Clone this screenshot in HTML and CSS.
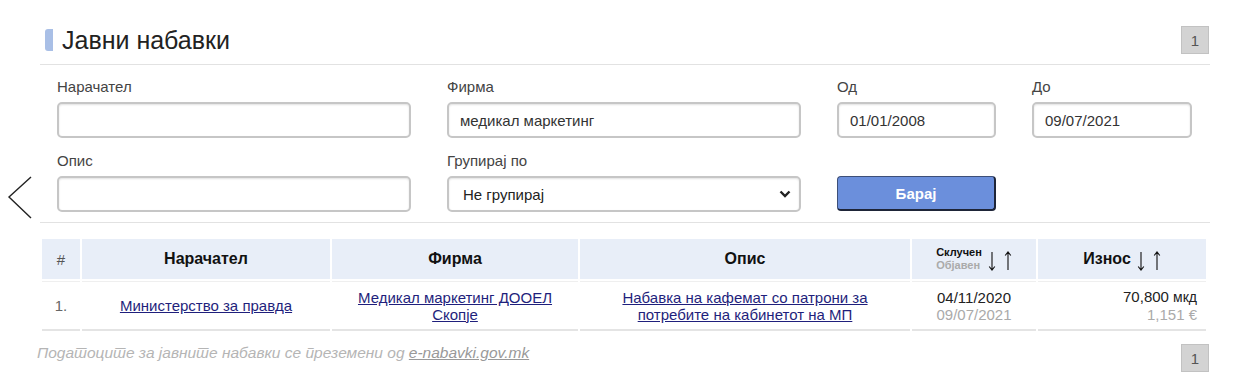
FILE: index.html
```html
<!DOCTYPE html>
<html lang="mk">
<head>
<meta charset="utf-8">
<title>Јавни набавки</title>
<link rel="stylesheet" href="styles.css">
</head>
<body>
<div class="back">
  <svg width="26" height="44" viewBox="0 0 26 44"><polyline points="24,1 2,21 24,42" fill="none" stroke="#222" stroke-width="1.4"/></svg>
</div>
<div class="page">
  <div class="header">
    <h1 class="title"><span class="accent"></span>Јавни набавки</h1>
    <span class="pager">1</span>
  </div>
  <form class="filters">
    <div class="field">
      <label class="lbl">Нарачател</label>
      <input class="inp" type="text" value="">
    </div>
    <div class="field">
      <label class="lbl">Фирма</label>
      <input class="inp" type="text" value="медикал маркетинг">
    </div>
    <div class="field">
      <label class="lbl">Од</label>
      <input class="inp" type="text" value="01/01/2008">
    </div>
    <div class="field">
      <label class="lbl">До</label>
      <input class="inp" type="text" value="09/07/2021">
    </div>
    <div class="field">
      <label class="lbl">Опис</label>
      <input class="inp" type="text" value="">
    </div>
    <div class="field">
      <label class="lbl">Групирај по</label>
      <div class="selwrap">
        <select class="inp sel"><option>Не групирај</option></select>
        <svg class="chev" width="12" height="8" viewBox="0 0 12 8"><polyline points="1.5,1.5 6,6 10.5,1.5" fill="none" stroke="#222" stroke-width="2.4"/></svg>
      </div>
    </div>
    <div class="field btnfield">
      <button class="btn" type="button">Барај</button>
    </div>
  </form>
  <table class="grid">
    <colgroup><col class="c1"><col class="c2"><col class="c3"><col class="c4"><col class="c5"><col class="c6"></colgroup>
    <thead>
      <tr>
        <th class="num">#</th>
        <th>Нарачател</th>
        <th>Фирма</th>
        <th>Опис</th>
        <th>
          <span class="sorthead">
            <span class="two"><span class="s1">Склучен</span><span class="s2">Објавен</span></span>
            <span class="arrows">
              <svg width="8" height="20" viewBox="0 0 8 20"><path d="M4 1V19M1.2 15.5L4 19L6.8 15.5" fill="none" stroke="#111" stroke-width="1.1"/></svg>
              <svg width="8" height="20" viewBox="0 0 8 20"><path d="M4 19V1M1.2 4.5L4 1L6.8 4.5" fill="none" stroke="#111" stroke-width="1.1"/></svg>
            </span>
          </span>
        </th>
        <th>
          <span class="sorthead">
            <span>Износ</span>
            <span class="arrows">
              <svg width="8" height="20" viewBox="0 0 8 20"><path d="M4 1V19M1.2 15.5L4 19L6.8 15.5" fill="none" stroke="#111" stroke-width="1.1"/></svg>
              <svg width="8" height="20" viewBox="0 0 8 20"><path d="M4 19V1M1.2 4.5L4 1L6.8 4.5" fill="none" stroke="#111" stroke-width="1.1"/></svg>
            </span>
          </span>
        </th>
      </tr>
    </thead>
    <tbody>
      <tr>
        <td class="num">1.</td>
        <td class="ctr"><a href="#">Министерство за правда</a></td>
        <td class="ctr"><a href="#">Медикал маркетинг ДООЕЛ Скопје</a></td>
        <td class="ctr"><a href="#">Набавка на кафемат со патрони за потребите на кабинетот на МП</a></td>
        <td class="ctr date"><span class="d1">04/11/2020</span><span class="d2">09/07/2021</span></td>
        <td class="amt"><span class="a1">70,800 <small>мкд</small></span><span class="a2">1,151 €</span></td>
      </tr>
    </tbody>
  </table>
  <div class="footer">
    <p class="note">Податоците за јавните набавки се преземени од <a href="#">e-nabavki.gov.mk</a></p>
    <span class="pager">1</span>
  </div>
</div>
</body>
</html>
```

FILE: styles.css
```css
* { box-sizing: border-box; }
html, body { margin: 0; padding: 0; background: #fff; }
body {
  font-family: "Liberation Sans", Arial, sans-serif;
  color: #333;
  position: relative;
  height: 379px;
  overflow: hidden;
}
.back {
  position: absolute;
  left: 7px;
  top: 176px;
  width: 26px;
  height: 44px;
}
.back svg { display: block; }
.page {
  margin-left: 40px;
  width: 1170px;
}
.header {
  height: 65px;
  display: flex;
  align-items: center;
  justify-content: space-between;
  border-bottom: 1px solid #e2e2e2;
  padding-top: 16px;
}
.title {
  margin: 0;
  display: flex;
  align-items: center;
  font-size: 25px;
  font-weight: normal;
  color: #222;
  padding-left: 5px;
}
.accent {
  display: inline-block;
  width: 8px;
  height: 22px;
  background: #a9bfe6;
  border-radius: 3px 0 0 3px;
  margin-right: 9px;
}
.pager {
  display: inline-flex;
  align-items: center;
  justify-content: center;
  width: 28px;
  height: 28px;
  background: #d3d3d3;
  border: 1px solid #c2c2c2;
  color: #555;
  font-size: 15px;
  margin-right: 1px;
}
.filters {
  display: grid;
  grid-template-columns: 354px 354px 159px 160px;
  column-gap: 36px;
  row-gap: 14px;
  padding: 13px 0 10px 17px;
  border-bottom: 1px solid #e2e2e2;
}
.field { display: flex; flex-direction: column; }
.lbl {
  font-size: 15px;
  line-height: 18px;
  color: #444;
  margin-bottom: 6px;
}
.inp {
  height: 36px;
  width: 100%;
  border: 2px solid #c6c6c6;
  border-radius: 5px;
  box-shadow: inset 0 1px 2px rgba(0,0,0,0.12);
  font-family: "Liberation Sans", Arial, sans-serif;
  font-size: 15px;
  color: #333;
  padding: 0 11px;
  background: #fff;
  outline: none;
}
.selwrap { position: relative; }
.sel {
  appearance: none;
  -webkit-appearance: none;
  padding-left: 14px;
  color: #222;
}
.chev {
  position: absolute;
  right: 10px;
  top: 14px;
}
.btnfield { justify-content: flex-end; }
.btn {
  height: 35px;
  width: 159px;
  background: #6b8fdc;
  border: 1px solid #3d4f78;
  border-right: 2px solid #1e2538;
  border-bottom: 2px solid #1e2538;
  border-radius: 4px;
  color: #fff;
  font-family: "Liberation Sans", Arial, sans-serif;
  font-weight: bold;
  font-size: 15px;
  margin-bottom: 1px;
}
.grid {
  margin-top: 14px;
  width: 1168px;
  table-layout: fixed;
  border-collapse: separate;
  border-spacing: 2px;
}
.c1 { width: 38px; }
.c2 { width: 248px; }
.c3 { width: 246px; }
.c4 { width: 330px; }
.c5 { width: 124px; }
.c6 { width: 168px; }
.grid th {
  background: #e8eef8;
  height: 40px;
  font-size: 16px;
  font-weight: bold;
  color: #111;
  padding: 0;
  text-align: center;
}
.grid th.num { font-weight: normal; color: #555; font-size: 15px; }
.sorthead {
  display: inline-flex;
  align-items: center;
  gap: 6px;
  vertical-align: middle;
}
.two {
  display: flex;
  flex-direction: column;
  font-size: 11px;
  line-height: 13px;
  text-align: left;
}
.s1 { color: #111; }
.s2 { color: #aaa; }
.arrows { display: inline-flex; gap: 8px; align-items: center; padding-top: 3px; }
.arrows svg { display: block; }
.grid td {
  border-top: 1px solid #efefef;
  border-bottom: 2px solid #e4e4e4;
  height: 50px;
  padding: 6px 6px;
  font-size: 15px;
  line-height: 17px;
  vertical-align: middle;
}
.grid td.num { text-align: center; color: #666; }
.ctr { text-align: center; }
.grid a { color: #1f1f7c; }
.date span, .amt span { display: block; }
.d1 { color: #222; }
.d2 { color: #aaa; }
.amt { text-align: right; padding-right: 9px !important; }
.a1 { color: #222; }
.a1 small { font-size: 14px; }
.a2 { color: #aaa; }
.footer {
  display: flex;
  justify-content: space-between;
  align-items: flex-start;
  margin-top: 11px;
}
.note {
  margin: 0 0 0 -3px;
  font-size: 15.5px;
  line-height: 18px;
  font-style: italic;
  color: #b5b5b5;
}
.note a { color: #999; }
```
